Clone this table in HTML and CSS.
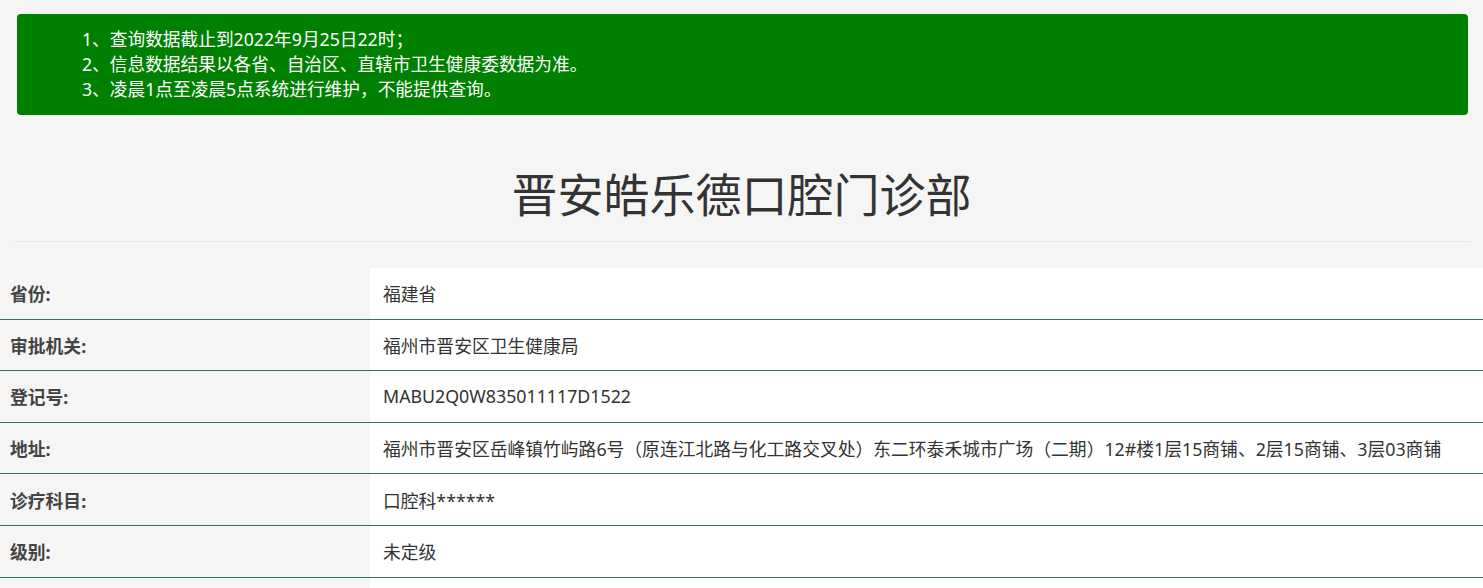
FILE: index.html
```html
<!DOCTYPE html>
<html lang="zh-CN">
<head>
<meta charset="utf-8">
<title>晋安皓乐德口腔门诊部</title>
<link rel="stylesheet" href="styles.css">
</head>
<body>
<div class="notice">
  <ul class="notice-list">
    <li>1、查询数据截止到2022年9月25日22时；</li>
    <li>2、信息数据结果以各省、自治区、直辖市卫生健康委数据为准。</li>
    <li>3、凌晨1点至凌晨5点系统进行维护，不能提供查询。</li>
  </ul>
</div>
<h1 class="title">晋安皓乐德口腔门诊部</h1>
<hr class="divider">
<table class="info">
  <tr><th>省份:</th><td>福建省</td></tr>
  <tr><th>审批机关:</th><td>福州市晋安区卫生健康局</td></tr>
  <tr><th>登记号:</th><td>MABU2Q0W835011117D1522</td></tr>
  <tr><th>地址:</th><td>福州市晋安区岳峰镇竹屿路6号（原连江北路与化工路交叉处）东二环泰禾城市广场（二期）12#楼1层15商铺、2层15商铺、3层03商铺</td></tr>
  <tr><th>诊疗科目:</th><td>口腔科******</td></tr>
  <tr><th>级别:</th><td>未定级</td></tr>
  <tr><th></th><td></td></tr>
</table>
</body>
</html>
```

FILE: styles.css
```css
html, body {
  margin: 0;
  padding: 0;
}
body {
  background: #f5f5f5;
  font-family: "Noto Sans", "Noto Sans CJK SC", sans-serif;
  color: #333;
  overflow: hidden;
}
.notice {
  margin: 14px 15px 0 17px;
  background: #008000;
  border-radius: 4px;
  padding: 13px 0 13px 0;
  height: 101px;
  box-sizing: border-box;
}
.notice-list {
  list-style: none;
  margin: 0;
  padding: 0 0 0 65px;
  color: #fff;
  font-size: 17.7px;
  line-height: 25px;
}
.title {
  margin: 0;
  padding-top: 48px;
  height: 78px;
  text-align: center;
  font-size: 46px;
  font-weight: normal;
  line-height: 62px;
  color: #333;
}
.divider {
  margin: 0 13px 0 15px;
  border: 0;
  border-top: 1px solid #e6e6e6;
  height: 0;
}
.info {
  margin-top: 26px;
  width: 100%;
  border-collapse: collapse;
}
.info tr {
  border-bottom: 1px solid #3f6e5d;
}
.info th, .info td {
  height: 50.6px;
  padding: 0;
  font-size: 17.8px;
  vertical-align: middle;
  text-align: left;
}
.info th {
  width: 360px;
  padding-left: 10px;
  font-weight: bold;
  color: #444;
  background: #f5f5f5;
}
.info td {
  padding-left: 13px;
  background: #fff;
  color: #333;
}
```
